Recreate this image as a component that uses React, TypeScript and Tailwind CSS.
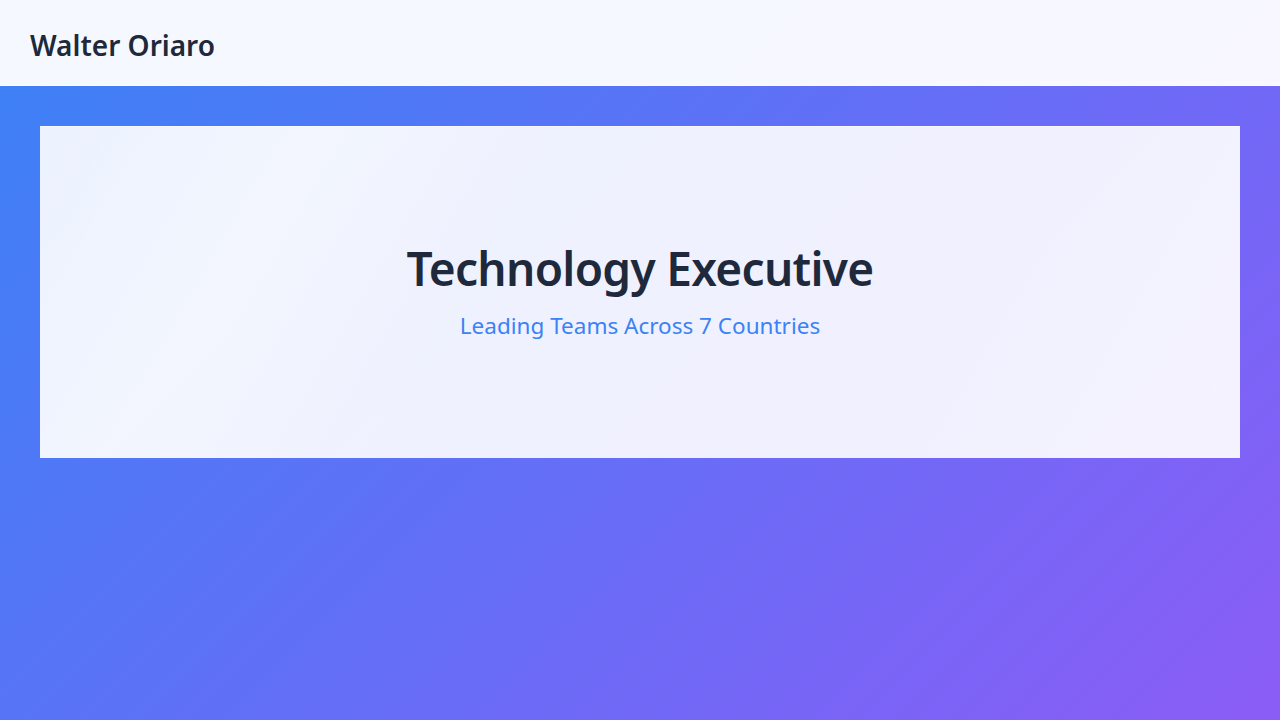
import React from "react";

const App = () => {
  return (
    <div
      className="min-h-screen w-full flex flex-col bg-[linear-gradient(135deg,#3b82f6_0%,#8b5cf6_100%)]"
      style={{ fontFamily: '"Noto Sans", "Open Sans", sans-serif' }}
    >
      <header className="h-[86px] flex items-center px-[30px] pt-1 bg-white/95 border-b border-white/40">
        <div className="text-[28px] font-semibold text-[#1e293b]">Walter Oriaro</div>
      </header>

      <main className="px-10 pt-10">
        <section className="relative h-[332px] bg-white/90 border-t border-white/50 flex flex-col items-center justify-center overflow-hidden">
          <div className="absolute inset-0 bg-[linear-gradient(120deg,rgba(255,255,255,0)_0%,rgba(255,255,255,0.3)_20%,rgba(255,255,255,0)_40%,rgba(255,255,255,0)_70%,rgba(255,255,255,0.2)_100%)]" />
          <h1 className="relative text-[46px] leading-[48px] font-semibold tracking-[-0.7px] text-[#1e293b]">
            Technology Executive
          </h1>
          <p className="relative mt-[18px] text-[22.5px] leading-[32px] text-[#3b82f6]">
            Leading Teams Across 7 Countries
          </p>
        </section>
      </main>
    </div>
  );
};

export default App;
